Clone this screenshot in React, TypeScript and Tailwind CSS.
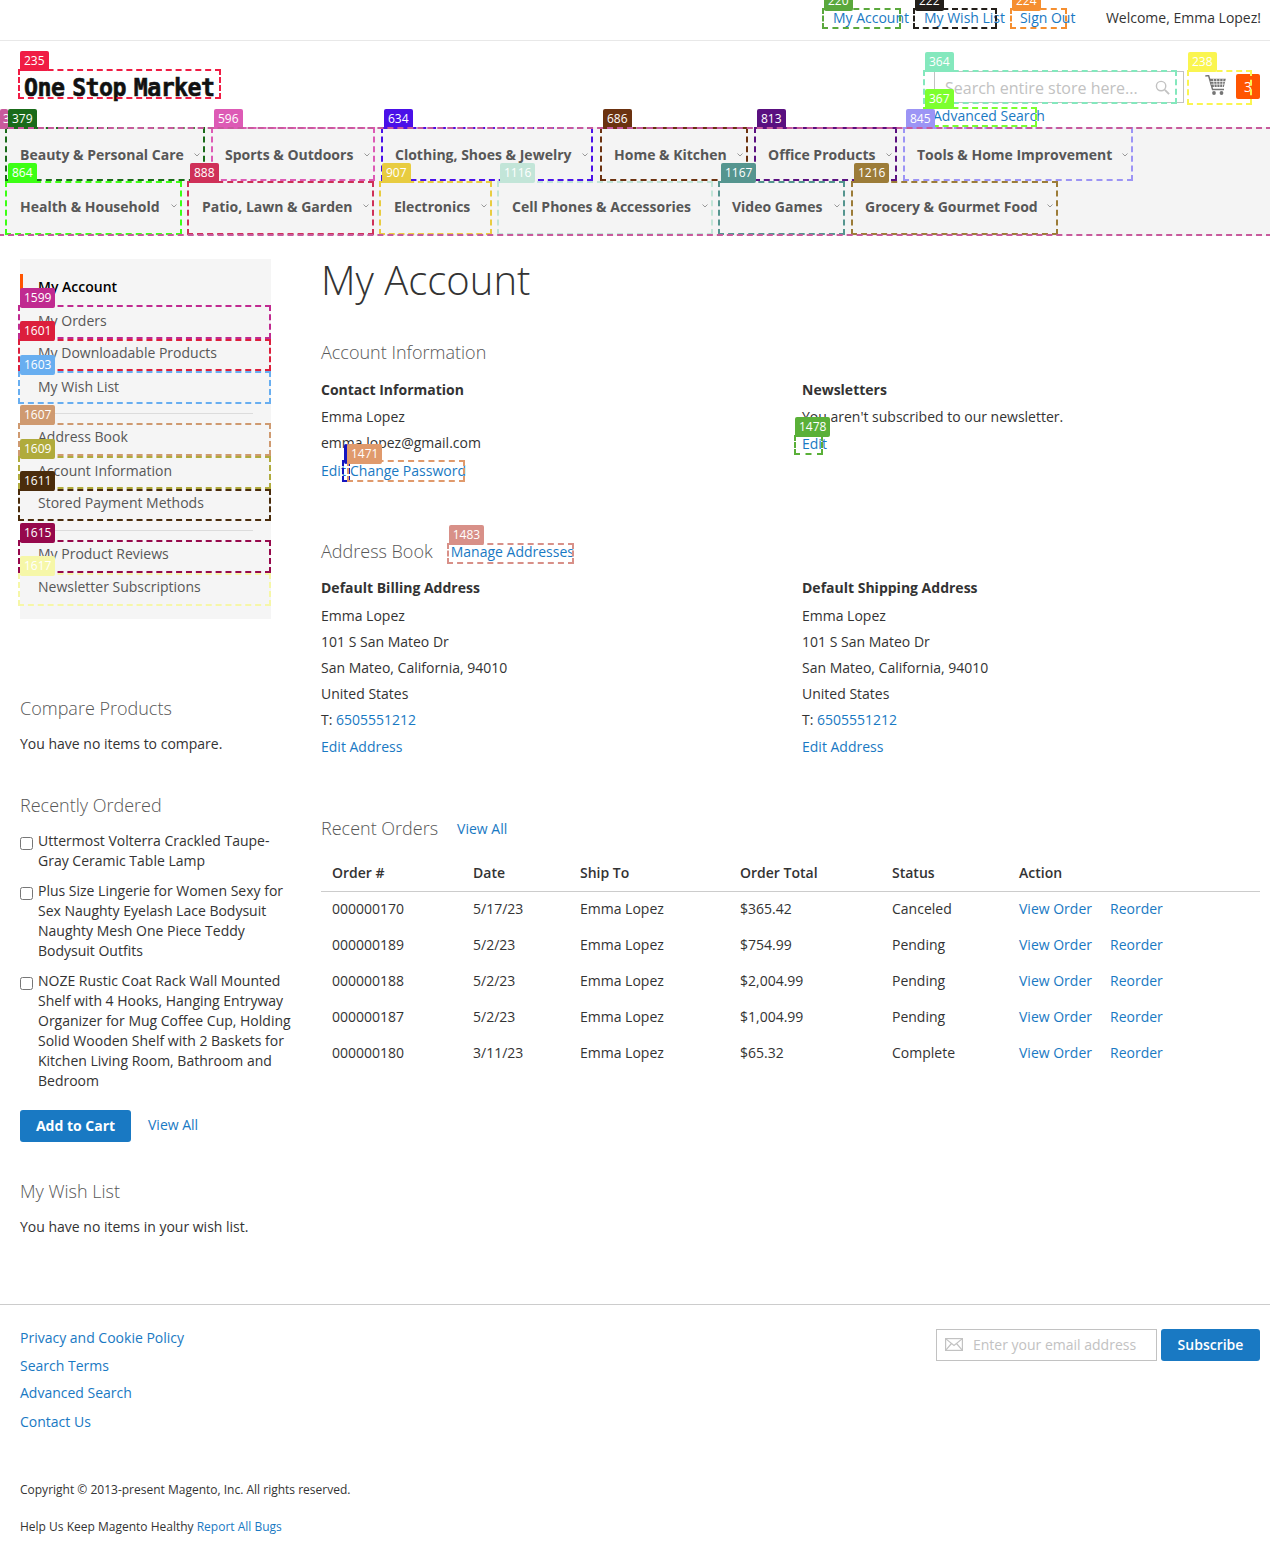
import React from 'react';

interface MarkedProps {
  label: string;
  line: string;
  tag: string;
  className?: string;
  tagPlace?: string;
  linePlace?: string;
  children?: React.ReactNode;
}

// dashed box with its number tag on the top left corner
function Marked({ label, line, tag, className = '', tagPlace = 'left-[2px] -top-[18px]', linePlace = 'inset-0', children }: MarkedProps) {
  return (
    <div className={`relative ${className}`}>
      {children}
      <div className={`absolute ${linePlace} pointer-events-none border-2 border-dashed ${line}`} />
      <div className={`absolute ${tagPlace} h-[20px] px-[4px] rounded-[2px] text-white text-[12px] leading-[20px] overflow-hidden ${tag}`}>
        {label}
      </div>
    </div>
  );
}

function Caret() {
  return (
    <svg width="6" height="4" viewBox="0 0 6 4" className="shrink-0" fill="none" stroke="#999" strokeWidth="1">
      <path d="M0.5 0.5 L3 3 L5.5 0.5" />
    </svg>
  );
}

const navRows = [
  [
    { label: 'Beauty & Personal Care', num: '379', w: 'w-[198px] ml-0 pl-[14px]', line: 'border-[#1a6b1a]', tag: 'bg-[#1a6b1a]' },
    { label: 'Sports & Outdoors', num: '596', w: 'w-[162px] ml-[8px] pl-[13px]', line: 'border-[#dd5ab5]', tag: 'bg-[#dd5ab5]' },
    { label: 'Clothing, Shoes & Jewelry', num: '634', w: 'w-[210px] ml-[8px] pl-[13px]', line: 'border-[#4a10e8]', tag: 'bg-[#4a10e8]' },
    { label: 'Home & Kitchen', num: '686', w: 'w-[146px] ml-[9px] pl-[13px]', line: 'border-[#6b3210]', tag: 'bg-[#6b3210]' },
    { label: 'Office Products', num: '813', w: 'w-[141px] ml-[8px] pl-[13px]', line: 'border-[#5a1080]', tag: 'bg-[#5a1080]' },
    { label: 'Tools & Home Improvement', num: '845', w: 'w-[228px] ml-[8px] pl-[13px]', line: 'border-[#9c94f5]', tag: 'bg-[#9c94f5]' },
  ],
  [
    { label: 'Health & Household', num: '864', w: 'w-[175px] ml-0 pl-[14px]', line: 'border-[#3cff14]', tag: 'bg-[#3cff14]' },
    { label: 'Patio, Lawn & Garden', num: '888', w: 'w-[185px] ml-[7px] pl-[14px]', line: 'border-[#cf3058]', tag: 'bg-[#cf3058]' },
    { label: 'Electronics', num: '907', w: 'w-[111px] ml-[7px] pl-[14px]', line: 'border-[#e8cc40]', tag: 'bg-[#e8cc40]' },
    { label: 'Cell Phones & Accessories', num: '1116', w: 'w-[214px] ml-[7px] pl-[14px]', line: 'border-[#c2e5d8]', tag: 'bg-[#c2e5d8]' },
    { label: 'Video Games', num: '1167', w: 'w-[125px] ml-[7px] pl-[13px]', line: 'border-[#55958f]', tag: 'bg-[#55958f]' },
    { label: 'Grocery & Gourmet Food', num: '1216', w: 'w-[205px] ml-[8px] pl-[13px]', line: 'border-[#9c7c38]', tag: 'bg-[#9c7c38]' },
  ],
];

const accountMenu = [
  { label: 'My Orders', num: '1599', size: 'h-[34px] pt-[6px]', line: 'border-[#c02a90]', tag: 'bg-[#c02a90]', place: 'left-[2px] -top-[17px]' },
  { label: 'My Downloadable Products', num: '1601', size: 'h-[32px] pt-[4px]', line: 'border-[#dc1f3c]', tag: 'bg-[#dc1f3c]', place: 'left-[2px] -top-[18px]' },
  { label: 'My Wish List', num: '1603', size: 'h-[33px] pt-[6px]', line: 'border-[#68aef0]', tag: 'bg-[#68aef0]', place: 'left-[2px] -top-[16px]' },
  { divider: true },
  { label: 'Address Book', num: '1607', size: 'h-[33px] pt-[4px]', line: 'border-[#cf9a70]', tag: 'bg-[#cf9a70]', place: 'left-[2px] -top-[18px]' },
  { label: 'Account Information', num: '1609', size: 'h-[33px] pt-[5px]', line: 'border-[#b0ab3c]', tag: 'bg-[#b0ab3c]', place: 'left-[2px] -top-[17px]' },
  { label: 'Stored Payment Methods', num: '1611', size: 'h-[32px] pt-[4px]', line: 'border-[#4a2c0c]', tag: 'bg-[#4a2c0c]', place: 'left-[2px] -top-[18px]' },
  { divider: true },
  { label: 'My Product Reviews', num: '1615', size: 'h-[33px] pt-[4px]', line: 'border-[#96084c]', tag: 'bg-[#96084c]', place: 'left-[2px] -top-[17px]' },
  { label: 'Newsletter Subscriptions', num: '1617', size: 'h-[33px] pt-[4px]', line: 'border-[#f6f7a8]', tag: 'bg-[#f6f7a8]', place: 'left-[2px] -top-[17px]' },
];

const recentlyOrdered = [
  'Uttermost Volterra Crackled Taupe-Gray Ceramic Table Lamp',
  'Plus Size Lingerie for Women Sexy for Sex Naughty Eyelash Lace Bodysuit Naughty Mesh One Piece Teddy Bodysuit Outfits',
  'NOZE Rustic Coat Rack Wall Mounted Shelf with 4 Hooks, Hanging Entryway Organizer for Mug Coffee Cup, Holding Solid Wooden Shelf with 2 Baskets for Kitchen Living Room, Bathroom and Bedroom',
];

const orders = [
  { id: '000000170', date: '5/17/23', total: '$365.42', status: 'Canceled' },
  { id: '000000189', date: '5/2/23', total: '$754.99', status: 'Pending' },
  { id: '000000188', date: '5/2/23', total: '$2,004.99', status: 'Pending' },
  { id: '000000187', date: '5/2/23', total: '$1,004.99', status: 'Pending' },
  { id: '000000180', date: '3/11/23', total: '$65.32', status: 'Complete' },
];

const addressLines = ['Emma Lopez', '101 S San Mateo Dr', 'San Mateo, California, 94010', 'United States'];

function Address({ title }: { title: string }) {
  return (
    <div>
      <div className="h-[26px] leading-[26px] font-bold">{title}</div>
      <div className="mt-[2px]">
        {addressLines.map((line) => (
          <div key={line} className="h-[26px] leading-[26px]">{line}</div>
        ))}
        <div className="h-[26px] leading-[26px]">
          T: <a className="text-[#1979c3]">6505551212</a>
        </div>
      </div>
      <a className="block mt-px h-[26px] leading-[26px] text-[#1979c3]">Edit Address</a>
    </div>
  );
}

export default function App() {
  return (
    <div className="w-[1270px] h-[1561px] overflow-hidden bg-white text-[14px] text-[#333] font-['Open_Sans',sans-serif]">
      {/* top links */}
      <div className="h-[41px] border-b border-[#e8e8e8] flex justify-end pr-[9px] pt-[8px]">
        <Marked label="220" line="border-[#5aa83c]" tag="bg-[#5aa83c]" tagPlace="left-[2px] -top-[17px]" className="w-[79px] h-[21px] pl-[11px] pt-[2px]">
          <a className="block whitespace-nowrap leading-[16px] text-[#1979c3]">My Account</a>
        </Marked>
        <Marked label="222" line="border-[#231f1a]" tag="bg-[#231f1a]" tagPlace="left-[2px] -top-[17px]" className="ml-[12px] w-[84px] h-[21px] pl-[11px] pt-[2px]">
          <a className="block whitespace-nowrap leading-[16px] text-[#1979c3]">My Wish List</a>
        </Marked>
        <Marked label="224" line="border-[#f58f30]" tag="bg-[#f58f30]" tagPlace="left-[2px] -top-[17px]" className="ml-[13px] w-[57px] h-[21px] pl-[10px] pt-[2px]">
          <a className="block whitespace-nowrap leading-[16px] text-[#1979c3]">Sign Out</a>
        </Marked>
        <span className="ml-[39px] mt-[2px] leading-[16px]">Welcome, Emma Lopez!</span>
      </div>

      {/* logo, search, cart */}
      <div className="h-[86px] flex items-start pt-[28px] pl-[18px] pr-[18px]">
        <Marked label="235" line="border-[#f01c44]" tag="bg-[#f01c44]" className="w-[203px] h-[30px] pl-[6px]">
          <span className="block whitespace-nowrap leading-[38px] text-[25px] font-bold tracking-[-0.6px] text-[#111] font-['DejaVu_Sans_Mono',monospace] [word-spacing:-6px] [-webkit-text-stroke:0.6px_#111] scale-x-[0.93] origin-left">
            One Stop Market
          </span>
        </Marked>
        <div className="ml-auto mt-px w-[254px]">
          <Marked label="364" line="border-[#84e8bd]" tag="bg-[#84e8bd]" className="w-[254px] h-[34px] pt-px pl-[11px]">
            <div className="w-[250px] h-[32px] border border-[#c2c2c2] flex items-center pl-[10px] pr-[13px] text-[#c2c2c2] text-[16px] whitespace-nowrap">
              <span className="mt-[2px]">Search entire store here...</span>
              <svg width="15" height="15" viewBox="0 0 16 16" fill="none" stroke="#c2c2c2" strokeWidth="1.5" className="ml-auto">
                <circle cx="6.5" cy="6.5" r="5" />
                <path d="M10.5 10.5 L15 15" strokeWidth="2" />
              </svg>
            </div>
          </Marked>
          <Marked label="367" line="border-[#7dff2e]" tag="bg-[#7dff2e]" className="mt-[3px] w-[114px] h-[20px] pl-[10px]">
            <a className="block whitespace-nowrap leading-[18px] text-[#1979c3]">Advanced Search</a>
          </Marked>
        </div>
        <Marked label="238" line="border-[#faf550]" tag="bg-[#faf550]" tagPlace="left-[1px] -top-[18px]" className="ml-[10px] mt-px w-[65px] h-[35px] pl-[18px] pt-[5px]">
          <svg width="21" height="20" viewBox="0 0 21 20" fill="#757575">
            <path d="M0.3 1 L3.6 0.6 L7.6 14.6 H19" fill="none" stroke="#757575" strokeWidth="1.5" />
            <path d="M4.5 3.8 H20.8 L18.8 12 H6.8 Z" />
            <path d="M8.4 4 L9.4 12 M11.6 4 L12.1 12 M14.8 4 L14.8 12 M18 4 L17.4 12 M5.4 6.5 H20.2 M6.1 9.2 H19.5" stroke="#fff" strokeWidth="0.7" fill="none" />
            <circle cx="9" cy="18" r="1.9" />
            <circle cx="16.5" cy="18" r="1.9" />
          </svg>
          <div className="absolute left-[49px] top-[4px] w-[24px] h-[25px] rounded-[2px] bg-[#ff5501] text-white text-center leading-[25px]">3</div>
        </Marked>
      </div>

      {/* category nav */}
      <Marked
        label="3"
        line="border-[#c85a9c]"
        tag="bg-[#c85a9c] w-[8px] !pr-0 !pl-[3px]"
        tagPlace="left-0 -top-[18px]"
        linePlace="-inset-x-[2px] inset-y-0"
        className="bg-[#f4f4f4] h-[109px]"
      >
        {navRows.map((row, i) => (
          <div key={i} className="flex h-[54px] pl-[6px]">
            {row.map((item) => (
              <Marked key={item.num} label={item.num} line={item.line} tag={item.tag} linePlace="-inset-x-px inset-y-0" className={`${item.w} h-[54px]`}>
                <div className={`flex items-center justify-between h-[54px] pr-[4px] font-bold text-[#575757] whitespace-nowrap ${i === 0 ? 'pt-[1px]' : 'pb-[4px]'}`}>
                  <span>{item.label}</span>
                  <Caret />
                </div>
              </Marked>
            ))}
          </div>
        ))}
      </Marked>

      <div className="flex items-start pl-[20px] pt-[23px]">
        {/* sidebar */}
        <aside className="w-[271px] shrink-0">
          <div className="w-[251px] h-[360px] bg-[#f5f5f5]">
            <div className="pt-[15px]">
              <div className="h-[26px] leading-[26px] border-l-[3px] border-[#ff5501] pl-[15px] font-semibold text-[#000]">My Account</div>
            </div>
            <div className="mt-[5px]">
              {accountMenu.map((item, i) =>
                item.divider ? (
                  <div key={i} className="mx-[18px] my-[9px] h-px bg-[#dcdcdc]" />
                ) : (
                  <Marked key={item.num} label={item.num!} line={item.line!} tag={item.tag!} tagPlace={item.place} className={`-ml-[2px] w-[253px] pl-[20px] leading-[20px] text-[#575757] ${item.size}`}>
                    {item.label}
                  </Marked>
                ),
              )}
            </div>
          </div>

          <div className="mt-[76px] h-[26px] leading-[26px] text-[18px] font-light text-[#575757]">Compare Products</div>
          <div className="mt-[13px] leading-[20px]">You have no items to compare.</div>

          <div className="mt-[38px] h-[26px] leading-[26px] text-[18px] font-light text-[#575757]">Recently Ordered</div>
          <div className="mt-[13px] flex flex-col gap-[10px]">
            {recentlyOrdered.map((name) => (
              <label key={name} className="flex items-start leading-[20px]">
                <input type="checkbox" className="mt-[6px] w-[13px] h-[13px] shrink-0" />
                <span className="ml-[5px]">{name}</span>
              </label>
            ))}
          </div>
          <div className="mt-[19px] flex items-center">
            <button className="w-[111px] h-[32px] pb-[2px] rounded-[3px] bg-[#1979c3] text-white font-bold">Add to Cart</button>
            <a className="ml-[17px] pb-[4px] text-[#1979c3]">View All</a>
          </div>

          <div className="mt-[36px] h-[26px] leading-[26px] text-[18px] font-light text-[#575757]">My Wish List</div>
          <div className="mt-[13px] leading-[20px]">You have no items in your wish list.</div>
        </aside>

        {/* main column */}
        <main className="ml-[30px] w-[939px]">
          <h1 className="h-[42px] leading-[42px] text-[40px] font-light text-[#333] whitespace-nowrap">My Account</h1>

          <div className="mt-[38px] h-[26px] leading-[26px] text-[18px] font-light text-[#575757]">Account Information</div>
          <div className="mt-[12px] grid grid-cols-[481px_1fr]">
            <div>
              <div className="h-[26px] leading-[26px] font-bold">Contact Information</div>
              <div className="mt-px h-[26px] leading-[26px]">Emma Lopez</div>
              <div className="h-[26px] leading-[26px]">emma.lopez@gmail.com</div>
              <div className="mt-[2px] flex h-[26px] leading-[26px] text-[#1979c3]">
                <a className="w-[21px]">Edit</a>
                <Marked
                  label=""
                  line="border-[#1515c0]"
                  tag="bg-[#1515c0] !px-0 w-[4px]"
                  tagPlace="left-[2px] -top-[16px]"
                  className="mt-[2px] w-[8px] h-[22px]"
                />
                <Marked label="1471" line="border-[#e09a6c]" tag="bg-[#e09a6c]" tagPlace="left-0 -top-[16px]" className="-ml-[3px] mt-[2px] w-[118px] h-[22px] pl-[3px]">
                  <a className="block -mt-[2px] whitespace-nowrap">Change Password</a>
                </Marked>
              </div>
            </div>
            <div>
              <div className="h-[26px] leading-[26px] font-bold">Newsletters</div>
              <div className="mt-px h-[26px] leading-[26px]">You aren't subscribed to our newsletter.</div>
              <Marked label="1478" line="border-[#5ab038]" tag="bg-[#5ab038]" className="-ml-[8px] mt-[5px] w-[29px] h-[20px] pl-[8px] leading-[18px] text-[#1979c3]" tagPlace="left-[1px] -top-[18px]">
                <a className="whitespace-nowrap">Edit</a>
              </Marked>
            </div>
          </div>

          <div className="mt-[54px] flex items-center h-[26px]">
            <span className="text-[18px] font-light text-[#575757]">Address Book</span>
            <Marked label="1483" line="border-[#d89088]" tag="bg-[#d89088]" className="ml-[14px] mt-[4px] w-[127px] h-[21px] pl-[4px] leading-[18px] text-[#1979c3]">
              <a className="whitespace-nowrap">Manage Addresses</a>
            </Marked>
          </div>
          <div className="mt-[11px] grid grid-cols-[481px_1fr]">
            <Address title="Default Billing Address" />
            <Address title="Default Shipping Address" />
          </div>

          <div className="mt-[55px] flex items-center h-[26px]">
            <span className="text-[18px] font-light text-[#575757]">Recent Orders</span>
            <a className="ml-[19px] text-[#1979c3]">View All</a>
          </div>

          <table className="mt-[14px] w-[939px] table-fixed border-collapse text-left">
            <colgroup>
              <col className="w-[141px]" />
              <col className="w-[107px]" />
              <col className="w-[160px]" />
              <col className="w-[152px]" />
              <col className="w-[127px]" />
              <col />
            </colgroup>
            <thead>
              <tr className="h-[36px] border-b border-[#ccc] font-semibold">
                <th className="pl-[11px] font-semibold">Order #</th>
                <th className="pl-[11px] font-semibold">Date</th>
                <th className="pl-[11px] font-semibold">Ship To</th>
                <th className="pl-[11px] font-semibold">Order Total</th>
                <th className="pl-[11px] font-semibold">Status</th>
                <th className="pl-[11px] font-semibold">Action</th>
              </tr>
            </thead>
            <tbody>
              {orders.map((o) => (
                <tr key={o.id} className="h-[36px]">
                  <td className="pl-[11px] pb-[2px]">{o.id}</td>
                  <td className="pl-[11px] pb-[2px]">{o.date}</td>
                  <td className="pl-[11px] pb-[2px]">Emma Lopez</td>
                  <td className="pl-[11px] pb-[2px]">{o.total}</td>
                  <td className="pl-[11px] pb-[2px]">{o.status}</td>
                  <td className="pl-[11px] pb-[2px] text-[#1979c3]">
                    <a className="inline-block w-[91px]">View Order</a>
                    <a>Reorder</a>
                  </td>
                </tr>
              ))}
            </tbody>
          </table>
        </main>
      </div>

      {/* footer */}
      <footer className="mt-[67px] border-t border-[#ccc] pl-[20px] pr-[10px]">
        <div className="flex justify-between items-start">
          <div className="pt-[23px] text-[#1979c3] leading-[20px]">
            <a className="block">Privacy and Cookie Policy</a>
            <a className="block mt-[8px]">Search Terms</a>
            <a className="block mt-[7px]">Advanced Search</a>
            <a className="block mt-[9px]">Contact Us</a>
          </div>
          <div className="pt-[24px] flex">
            <div className="w-[221px] h-[32px] border border-[#c2c2c2] flex items-center pl-[8px] pb-[1px] text-[#c2c2c2] whitespace-nowrap">
              <svg width="18" height="13" viewBox="0 0 18 13" fill="none" stroke="#c2c2c2" strokeWidth="1.2">
                <rect x="0.6" y="0.6" width="16.8" height="11.8" />
                <path d="M0.6 0.6 L9 7.5 L17.4 0.6 M0.6 12.4 L6.5 5.5 M17.4 12.4 L11.5 5.5" />
              </svg>
              <span className="ml-[10px]">Enter your email address</span>
            </div>
            <button className="ml-[4px] w-[99px] h-[32px] pb-[1px] rounded-[3px] bg-[#1979c3] text-white font-semibold">Subscribe</button>
          </div>
        </div>
        <div className="mt-[48px] text-[12px] leading-[20px]">Copyright © 2013-present Magento, Inc. All rights reserved.</div>
        <div className="mt-[17px] text-[12px] leading-[20px]">
          Help Us Keep Magento Healthy <a className="text-[#1979c3]">Report All Bugs</a>
        </div>
      </footer>
    </div>
  );
}
